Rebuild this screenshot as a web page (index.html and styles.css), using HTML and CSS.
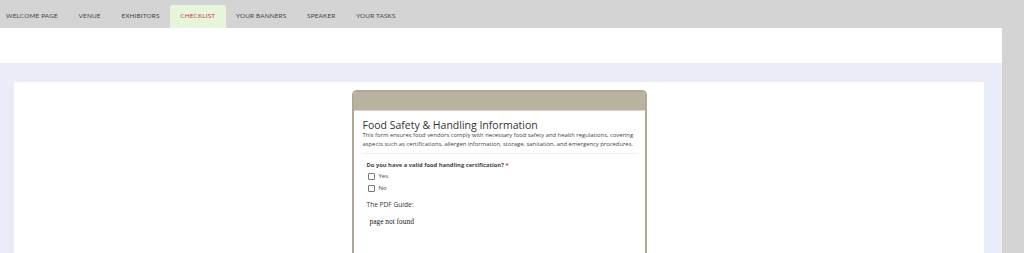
FILE: index.html
```html
<!DOCTYPE html>
<html lang="en">
<head>
  <meta charset="UTF-8">
  <title>Checklist</title>
  <link rel="stylesheet" href="styles.css">
</head>
<body>

  <!-- Tabs -->
  <nav class="tabs">
    <a class="tab">WELCOME PAGE</a>
    <a class="tab">VENUE</a>
    <a class="tab">EXHIBITORS</a>
    <a class="tab active">CHECKLIST</a>
    <a class="tab">YOUR BANNERS</a>
    <a class="tab">SPEAKER</a>
    <a class="tab">YOUR TASKS</a>
  </nav>

  <div class="page">
    <div class="page_top"></div>
    <div class="content">
      <div class="panel">

        <!-- Form -->
        <div class="form_card">
          <div class="form_head"></div>
          <div class="form_body">
            <h1 class="form_title">Food Safety &amp; Handling Information</h1>
            <p class="form_desc">This form ensures food vendors comply with necessary food safety and health regulations, covering aspects such as certifications, allergen information, storage, sanitation, and emergency procedures.</p>

            <div class="question">
              <div class="q_label">Do you have a valid food handling certification? <span class="req">*</span></div>
              <label class="opt"><span class="box"></span>Yes</label>
              <label class="opt"><span class="box"></span>No</label>
            </div>

            <div class="pdf_label">The PDF Guide:</div>
            <div class="not_found">page not found</div>
          </div>
        </div>

      </div>
    </div>
  </div>

</body>
</html>
```

FILE: styles.css
```css
:root {
  --cinza: #d4d4d4;
  --lavanda: #eaedf7;
  --bege: #b8b29e;
  --borda: #aea894;
}

body {
  margin: 0;
  background: var(--cinza);
  height: 253px;
  overflow: hidden;
}

.tabs {
  display: flex;
  height: 28px;
  align-items: flex-end;
}

.tab {
  font-family: "Lato", sans-serif;
  font-size: 6.4px;
  font-weight: 400;
  color: #444;
  padding: 0 10.4px;
  height: 23px;
  line-height: 21px;
  letter-spacing: 0.15px;
}

.tab:first-child {
  padding-left: 6px;
}

.tab.active {
  background: #e8f5dd;
  color: #b04a40;
  border-radius: 3px 3px 0 0;
}

.page {
  margin-right: 22px;
  background: #fff;
}

.page_top {
  height: 35px;
}

.content {
  background: var(--lavanda);
  padding: 19px 18px 0 14px;
}

.panel {
  background: #fff;
  padding-top: 8px;
  height: 200px;
  display: flex;
  justify-content: center;
}

.form_card {
  width: 291px;
  border: 2px solid var(--borda);
  border-bottom: none;
  border-radius: 5px 5px 0 0;
  font-family: "Open Sans", sans-serif;
  color: #333;
}

.form_head {
  height: 18px;
  background: var(--bege);
  border-radius: 3px 3px 0 0;
  border-bottom: 1px solid #d9d5c8;
}

.form_body {
  padding: 8px 8px 0 9px;
}

.form_title {
  font-size: 10.5px;
  font-weight: 400;
  margin: 0;
  line-height: 12px;
  color: #333;
}

.form_desc {
  font-size: 5.85px;
  line-height: 8.5px;
  margin: 0;
  color: #444;
  padding-bottom: 5px;
  border-bottom: 1px solid #eee;
}

.question {
  padding: 6px 0 0 4px;
}

.q_label {
  font-size: 5.8px;
  font-weight: 700;
  color: #444;
  line-height: 10px;
}

.req {
  color: #d33;
}

.opt {
  display: flex;
  align-items: center;
  gap: 4px;
  font-size: 6px;
  color: #444;
  height: 12px;
  padding-left: 1px;
}

.box {
  width: 5px;
  height: 5px;
  border: 0.7px solid #777;
  border-radius: 1px;
}

.pdf_label {
  font-size: 6.6px;
  color: #333;
  margin: 6px 0 0 4px;
}

.not_found {
  font-family: "Liberation Serif", serif;
  font-size: 7.4px;
  color: #222;
  margin: 8px 0 0 7px;
}
```
